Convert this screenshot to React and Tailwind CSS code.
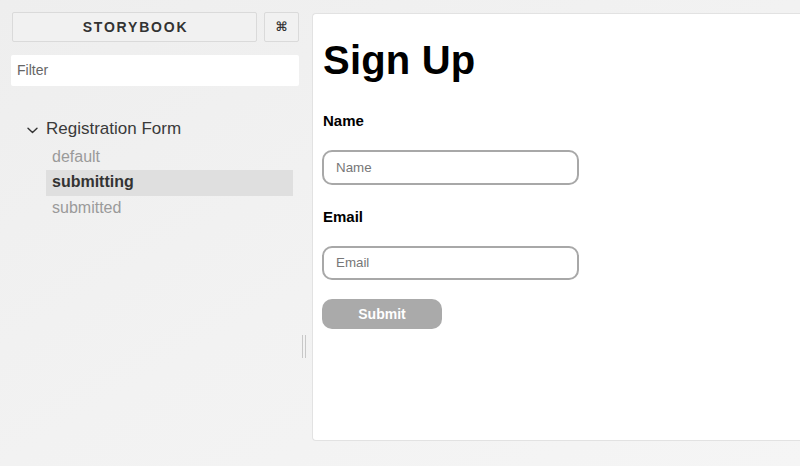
import React from "react";

const font = { fontFamily: '"Liberation Sans", Arial, sans-serif' };

function Chevron() {
  return (
    <svg width="11" height="7" viewBox="0 0 11 7" className="shrink-0">
      <path d="M1 1.2 L5.5 5.6 L10 1.2" fill="none" stroke="#333" strokeWidth="1.4" strokeLinecap="round" strokeLinejoin="round" />
    </svg>
  );
}

export default function App() {
  return (
    <div
      className="w-[800px] h-[466px] overflow-hidden flex bg-gradient-to-br from-[#eeeeee] via-[#f2f2f2] to-[#f5f5f5] font-['Liberation_Sans',Arial,sans-serif]"
      style={font}
    >
      {/* Sidebar */}
      <div className="w-[299px] shrink-0 pl-[11px] pt-[12px] flex flex-col">
        <div className="flex gap-[7px] h-[31px]">
          <div className="ml-[1px] w-[245px] h-[30px] border border-[#dadada] rounded-[2px] bg-[#f1f1f1] flex items-center justify-center text-[14px] font-bold tracking-[1.8px] text-[#333] pl-[2px]">
            STORYBOOK
          </div>
          <div className="w-[35px] h-[30px] border border-[#dadada] rounded-[2px] bg-[#f1f1f1] flex items-center justify-center text-[13px] font-bold text-[#333] font-['DejaVu_Sans',sans-serif]">
            ⌘
          </div>
        </div>
        <div className="mt-[12px] w-[288px] h-[31px] bg-white rounded-[2px] flex items-center pl-[6px] text-[14px] text-[#666]">
          Filter
        </div>
        <div className="mt-[32px] flex flex-col">
          <div className="h-[22px] flex items-center leading-[22px]">
            <div className="w-[35px] pl-[16px] flex items-center pt-[2px]">
              <Chevron />
            </div>
            <span className="text-[17px] text-[#3a3a3a]">Registration Form</span>
          </div>
          <div className="mt-[5px] pl-[35px] pr-[6px] flex flex-col">
            <div className="h-[25px] leading-[23px] pl-[6px] text-[16px] text-[#9a9a9a]">default</div>
            <div className="h-[26px] leading-[24px] pl-[6px] text-[16px] font-bold text-[#333] bg-[#dfdfdf]">submitting</div>
            <div className="h-[25px] leading-[23px] pl-[6px] text-[16px] text-[#9a9a9a]">submitted</div>
          </div>
        </div>
      </div>

      {/* Resize handle column */}
      <div className="w-[13px] shrink-0 flex justify-center pt-[335px]">
        <div className="flex gap-[2px] h-[23px] -ml-[4px]">
          <div className="w-[1px] h-full bg-[#c8c8c8]" />
          <div className="w-[1px] h-full bg-[#c8c8c8]" />
        </div>
      </div>

      {/* Preview */}
      <div className="flex-1 pt-[13px] pb-[25px]">
        <div className="h-full bg-white border border-[#e2e2e2] border-r-0 rounded-l-[4px] pl-[9px] pt-[26px]">
          <h1 className="ml-[1px] text-[40px] leading-none font-bold text-black tracking-[0.2px]">Sign Up</h1>
          <div className="ml-[1px] mt-[33px] text-[15px] leading-none font-bold text-black">Name</div>
          <div className="mt-[22px] w-[257px] h-[35px] border-2 border-[#a8a8a8] rounded-[10px] flex items-center pl-[12px] text-[13.33px] text-[#777]">
            Name
          </div>
          <div className="ml-[1px] mt-[24px] text-[15px] leading-none font-bold text-black">Email</div>
          <div className="mt-[22px] w-[257px] h-[34px] border-2 border-[#a8a8a8] rounded-[10px] flex items-center pl-[12px] text-[13.33px] text-[#777]">
            Email
          </div>
          <div className="mt-[19px] w-[120px] h-[30px] bg-[#aaaaaa] rounded-[10px] flex items-center justify-center text-[14px] font-bold text-white">
            Submit
          </div>
        </div>
      </div>
    </div>
  );
}
